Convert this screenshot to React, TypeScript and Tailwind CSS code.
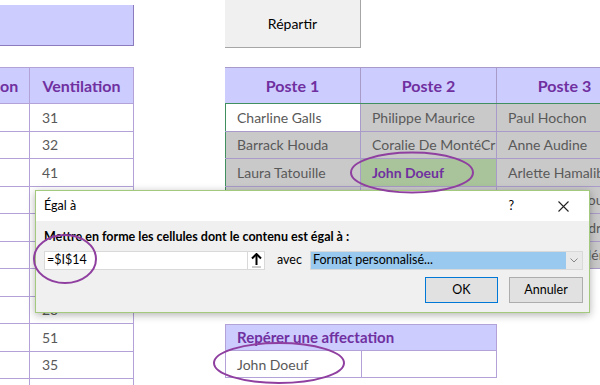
import React from "react";

const leftValues = ["31", "32", "41", "28", "44", "37", "42", "23", "51", "35", "27"];

type Cell = { text: string; tone: "white" | "gray" | "green" };

const posteRows: Cell[][] = [
  [
    { text: "Charline Galls", tone: "white" },
    { text: "Philippe Maurice", tone: "gray" },
    { text: "Paul Hochon", tone: "gray" },
  ],
  [
    { text: "Barrack Houda", tone: "gray" },
    { text: "Coralie De MontéCristo", tone: "gray" },
    { text: "Anne Audine", tone: "gray" },
  ],
  [
    { text: "Laura Tatouille", tone: "gray" },
    { text: "John Doeuf", tone: "green" },
    { text: "Arlette Hamalibi", tone: "gray" },
  ],
  [
    { text: "Sarah Fraise", tone: "gray" },
    { text: "Jean Neymar", tone: "gray" },
    { text: "Ella Gérard Bouf", tone: "gray" },
  ],
  [
    { text: "Alain Provist", tone: "gray" },
    { text: "Marc Assin", tone: "gray" },
    { text: "Marie Bernardrd", tone: "gray" },
  ],
  [
    { text: "Paul Ochon", tone: "gray" },
    { text: "Annie Versaire", tone: "gray" },
    { text: "Jean Rigolé Hérvé", tone: "gray" },
  ],
];

function toneClass(tone: Cell["tone"]) {
  if (tone === "white") return "bg-white text-[#595959]";
  if (tone === "green") return "bg-[#a9c49b] font-bold text-[#7030a0]";
  return "bg-[#c9c9c9] text-[#595959]";
}

function LeftBlock() {
  return (
    <div className="w-[134px] shrink-0 pt-[5px]">
      <div className="h-[41px] border-r border-b border-[#8c7cbf] bg-[#ccccff]" />
      <div className="mt-[21px] border-t border-[#b3a2d8]">
        <div className="flex h-[36px] border-b border-[#b3a2d8] bg-[#ccccff] text-[16px] font-bold text-[#7030a0]">
          <div className="flex w-[30px] items-center border-r border-[#b3a2d8]">on</div>
          <div className="flex flex-1 items-center justify-center border-r border-[#b3a2d8]">Ventilation</div>
        </div>
        {leftValues.map((v, i) => (
          <div key={i} className="flex h-[27.5px] border-b border-[#b3a2d8] text-[14px] text-[#595959]">
            <div className="w-[30px] border-r border-[#b3a2d8]" />
            <div className="flex flex-1 items-center border-r border-[#b3a2d8] pl-[12px]">{v}</div>
          </div>
        ))}
      </div>
    </div>
  );
}

function PosteTable() {
  return (
    <div className="w-[408px] border-t border-[#a99bc9] text-[14px]">
      <div className="flex h-[36px] border-b border-[#3f8f5f] bg-[#ccccff] text-[16px] font-bold text-[#7030a0]">
        {["Poste 1", "Poste 2", "Poste 3"].map((p) => (
          <div key={p} className="flex w-[136px] items-center justify-center border-r border-[#a99bc9]">
            {p}
          </div>
        ))}
      </div>
      {posteRows.map((row, i) => (
        <div key={i} className="flex h-[27.5px] border-b border-[#a99bc9]">
          {row.map((c, j) => (
            <div
              key={j}
              className={`flex w-[136px] items-center overflow-hidden whitespace-nowrap border-r border-[#a99bc9] pl-[11px] ${toneClass(c.tone)} ${
                j === 0 ? "border-l-[1.5px] border-l-[#3f8f5f] pl-[10px]" : ""
              }`}
            >
              {c.text}
            </div>
          ))}
        </div>
      ))}
    </div>
  );
}

function Reperer() {
  return (
    <div className="mt-[55px] w-[272px] text-[14px]">
      <div className="flex h-[27px] items-center border border-[#b3a2d8] bg-[#ccccff] pl-[11px] text-[15px] font-bold text-[#7030a0]">
        Repérer une affectation
      </div>
      <div className="flex h-[27px] border-x border-b border-[#b3a2d8] text-[#595959]">
        <div className="flex w-[136px] items-center border-r border-[#b3a2d8] pl-[11px]">John Doeuf</div>
        <div className="flex-1" />
      </div>
    </div>
  );
}

function Dialog() {
  return (
    <div className="absolute left-[35px] top-[190px] flex h-[123px] w-[555px] flex-col border border-[#a3c97c] bg-[#f0f0f0] font-['Lato',sans-serif] text-[12.5px] text-black shadow-[0_2px_8px_rgba(0,0,0,0.3)]">
      <div className="flex h-[30px] shrink-0 items-center bg-white pl-[8px]">
        <span>Égal à</span>
        <span className="ml-auto mr-[44px]">?</span>
        <svg width="11" height="11" viewBox="0 0 11 11" className="mr-[20px]">
          <path d="M0.5 0.5 L10.5 10.5 M10.5 0.5 L0.5 10.5" stroke="#222" strokeWidth="1.1" />
        </svg>
      </div>
      <div className="px-[8px] pr-[6px] pt-[8px]">
        <p className="font-bold leading-[16px]">Mettre en forme les cellules dont le contenu est égal à :</p>
        <div className="mt-[6px] flex h-[19px] items-center">
          <div className="flex h-[19px] w-[204px] items-center border border-[#d9d9d9] bg-white pl-[2px]">=$I$14</div>
          <div className="flex h-[19px] w-[17px] items-center justify-center border border-l-0 border-[#d9d9d9] bg-white">
            <svg width="11" height="15" viewBox="0 0 11 15">
              <path d="M5.5 1 L5.5 12" stroke="#000" strokeWidth="2" />
              <path d="M1 5.5 L5.5 1 L10 5.5" stroke="#000" strokeWidth="2" fill="none" />
              <path d="M1 14 L10 14" stroke="#9a9a9a" strokeWidth="1" />
            </svg>
          </div>
          <span className="ml-[12px]">avec</span>
          <div className="ml-auto flex h-[19px] w-[273px] items-center border border-[#d9d9d9] bg-white">
            <div className="flex h-full flex-1 items-center bg-[#99c9ef] pl-[2px]">Format personnalisé...</div>
            <div className="flex h-full w-[16px] items-center justify-center bg-[#e9e9e9]">
              <svg width="8" height="5" viewBox="0 0 8 5">
                <path d="M0.5 0.5 L4 4 L7.5 0.5" stroke="#888" strokeWidth="1" fill="none" />
              </svg>
            </div>
          </div>
        </div>
        <div className="mt-[7px] flex justify-end gap-[11px]">
          <button className="flex h-[26px] w-[73px] items-center justify-center border border-[#0078d7] bg-[#e1e1e1]">OK</button>
          <button className="flex h-[26px] w-[74px] items-center justify-center border border-[#adadad] bg-[#e1e1e1]">Annuler</button>
        </div>
      </div>
    </div>
  );
}

export default function App() {
  return (
    <div className="relative h-[385px] w-[600px] overflow-hidden bg-white font-['Lato',sans-serif]">
      <div className="flex">
        <LeftBlock />
        <div className="ml-[91px] min-w-0 flex-1">
          <button className="flex h-[48px] w-[136px] items-center justify-center border-r border-b border-[#a6a6a6] bg-[#f0f0f0] text-[14px] text-black">
            Répartir
          </button>
          <div className="mt-[19px]">
            <PosteTable />
          </div>
          <Reperer />
        </div>
      </div>
      <Dialog />
      <svg className="pointer-events-none absolute inset-0" width="600" height="385">
        <g fill="none" stroke="#8f3f9f" strokeWidth="2">
          <ellipse cx="412" cy="172.5" rx="61" ry="20" />
          <ellipse cx="65" cy="259" rx="31" ry="24" />
          <ellipse cx="279" cy="363" rx="65" ry="20" />
        </g>
      </svg>
    </div>
  );
}
